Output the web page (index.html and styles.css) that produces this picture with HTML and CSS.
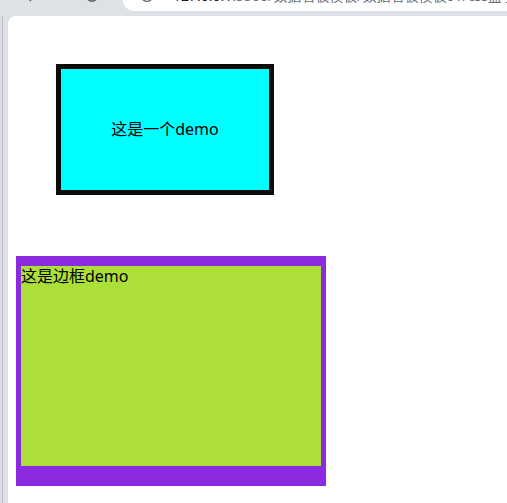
FILE: index.html
```html
<!DOCTYPE html>
<html lang="zh-CN">
<head>
<meta charset="utf-8">
<title>盒子模型</title>
<link rel="stylesheet" href="styles.css">
</head>
<body>
<div class="toolbar">
  <svg class="tb-icon back" width="16" height="16" viewBox="0 0 16 16"><path d="M8 2 L2 8 L8 14 M2 8 H15" fill="none" stroke="#5f6368" stroke-width="1.6"/></svg>
  <svg class="tb-icon reload" width="16" height="16" viewBox="0 0 16 16"><path d="M14 8 A6 6 0 1 1 11.5 3.2" fill="none" stroke="#5f6368" stroke-width="1.6"/></svg>
  <div class="address">
    <svg class="tb-icon info" width="16" height="16" viewBox="0 0 16 16"><circle cx="8" cy="8" r="6.3" fill="none" stroke="#5f6368" stroke-width="1.3"/></svg>
    <span class="url"><span class="host">127.0.0.1</span>:5500/数据看板模板/数据看板模板01/css盒子模型.html</span>
  </div>
</div>
<div class="frame">
  <div class="side"></div>
  <main class="page">
    <div class="box-one">这是一个demo</div>
    <div class="box-two">这是边框demo</div>
  </main>
</div>
</body>
</html>
```

FILE: styles.css
```css
html, body {
  margin: 0;
  padding: 0;
  height: 100%;
  overflow: hidden;
}
body {
  background: #dee1e6;
  font-family: "Noto Sans", "Noto Sans CJK SC", sans-serif;
}
.toolbar {
  height: 16px;
  display: flex;
  align-items: flex-start;
  overflow: hidden;
}
.tb-icon {
  flex: none;
  margin-top: -13px;
}
.back {
  margin-left: 23px;
}
.reload {
  margin-left: 45px;
}
.address {
  flex: 1;
  height: 11px;
  margin-left: 23px;
  background: #ffffff;
  border-bottom-left-radius: 12px;
  display: flex;
  align-items: flex-start;
  overflow: hidden;
}
.info {
  margin-left: 16px;
}
.url {
  margin-left: 18px;
  margin-top: -13px;
  font-size: 14px;
  line-height: 18px;
  color: #6b6e72;
  white-space: nowrap;
  font-family: "Noto Sans", "Noto Sans CJK SC", sans-serif;
}
.host {
  color: #1f1f1f;
}
.frame {
  display: flex;
  height: 487px;
}
.side {
  width: 8px;
  flex: none;
  background: linear-gradient(to right, #dcdde0 0, #dcdde0 2px, #b9bcc2 2px, #b9bcc2 3px, #dee1e6 3px);
}
.page {
  flex: 1;
  background: #ffffff;
  border-top-left-radius: 8px;
  display: flex;
  flex-direction: column;
  align-items: flex-start;
  font-size: 16px;
  color: #000;
}
.box-one {
  margin: 48px 0 0 48px;
  width: 208px;
  height: 121px;
  border: 5px solid #0a0a0a;
  background: #00ffff;
  display: flex;
  align-items: center;
  justify-content: center;
  line-height: 21px;
}
.box-two {
  margin: 61px 0 0 8px;
  width: 300px;
  height: 200px;
  border-style: solid;
  border-color: #8a2be2;
  border-width: 10px 5px 20px 5px;
  background: #acdf37;
  line-height: 21px;
}
```
